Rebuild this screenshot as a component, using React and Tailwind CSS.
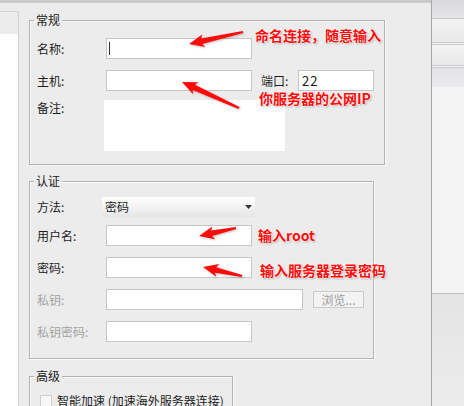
import React from 'react';

const font = "font-['Noto_Sans_CJK_SC','Noto_Sans',sans-serif]";

// red callout arrow, computed as a tapered polygon
const Arrow = ({ x1, y1, x2, y2 }) => {
  const dx = x2 - x1;
  const dy = y2 - y1;
  const len = Math.hypot(dx, dy);
  const ux = dx / len;
  const uy = dy / len;
  const nx = -uy;
  const ny = ux;
  const hl = 13;
  const hw = 6.5;
  const bx = x2 - ux * hl;
  const by = y2 - uy * hl;
  const p = (x, y, k) => `${(x + nx * k).toFixed(1)},${(y + ny * k).toFixed(1)}`;
  const pts = [
    p(x1, y1, 1.1),
    p(bx, by, 2.8),
    p(bx - ux * 2, by - uy * 2, hw),
    `${x2},${y2}`,
    p(bx - ux * 2, by - uy * 2, -hw),
    p(bx, by, -2.8),
    p(x1, y1, -1.1),
  ].join(' ');
  return <polygon points={pts} fill="#ff0a0a" />;
};

const Note = ({ left, top, children }) => (
  <div
    className="absolute text-[14px] leading-[16px] font-bold text-[#ff0a0a] whitespace-nowrap [text-shadow:0_0_2px_#fff,0_0_2px_#fff,0_0_2px_#fff,1px_1px_2px_rgba(0,0,0,0.4)]"
    style={{ left, top }}
  >
    {children}
  </div>
);

const Group = ({ title, className, children }) => (
  <div className={`relative border border-[#b3b3b3] shadow-[inset_1px_1px_0_#fafafa,1px_1px_0_#fafafa] ${className}`}>
    <span className="absolute -top-[9px] left-[4px] bg-[#ececec] px-[2px] text-[12px] leading-[16px] text-[#222]">
      {title}
    </span>
    {children}
  </div>
);

const Input = ({ w, children }) => (
  <div className={`h-[21px] ${w} border border-[#c6c6c6] bg-white flex items-center`}>{children}</div>
);

const Label = ({ w, gray, children }) => (
  <div className={`${w} text-[12px] leading-[16px] ${gray ? 'text-[#a3a3a3]' : 'text-[#1e1e1e]'}`}>{children}</div>
);

export default function App() {
  return (
    <div className={`relative w-[464px] h-[406px] overflow-hidden flex bg-[#ececec] ${font}`}>
      <div className="w-[432px] h-full flex flex-col border-r border-[#a8a8a8]">
        <div className="h-[3px] bg-[#cbcbcb]" />
        <div className="flex flex-1 min-h-0">
          {/* left list, mostly cut off */}
          <div className="w-[19px] mt-[8px] border-t border-r border-[#d2d2d2] flex flex-col">
            <div className="h-[22px] bg-[#ececec]" />
            <div className="flex-1 bg-white" />
          </div>

          <div className="flex-1 pl-[10px] pt-[17px]">
            <Group title="常规" className="w-[356px] pt-[17px] pl-[7px] pb-[13px]">
              <div className="flex items-center h-[21px]">
                <Label w="w-[69px]">名称:</Label>
                <Input w="w-[146px]">
                  <span className="ml-[2px] w-px h-[13px] bg-[#333]" />
                </Input>
              </div>
              <div className="flex items-center h-[21px] mt-[11px]">
                <Label w="w-[69px]">主机:</Label>
                <Input w="w-[146px]" />
                <div className="ml-[9px] w-[37px] text-[12px] leading-[16px] text-[#1e1e1e]">端口:</div>
                <Input w="w-[76px]">
                  <span className="ml-[3px] text-[13px] tracking-[1px] text-[#111]">22</span>
                </Input>
              </div>
              <div className="flex items-start mt-[9px]">
                <Label w="w-[67px]">备注:</Label>
                <div className="w-[181px] h-[51px] bg-white" />
              </div>
            </Group>

            <Group title="认证" className="w-[345px] mt-[16px] pt-[15px] pl-[7px] pb-[16px]">
              <div className="flex items-center h-[20px]">
                <Label w="w-[65px]">方法:</Label>
                <div className="w-[153px] h-[20px] bg-gradient-to-b from-white to-[#e6e6e6] flex items-center justify-between pl-[3px] pr-[3px]">
                  <span className="text-[12px] text-[#1e1e1e]">密码</span>
                  <svg width="7" height="4" viewBox="0 0 7 4">
                    <polygon points="0,0 7,0 3.5,4" fill="#333" />
                  </svg>
                </div>
              </div>
              <div className="flex items-center h-[21px] mt-[8px]">
                <Label w="w-[69px]">用户名:</Label>
                <Input w="w-[146px]" />
              </div>
              <div className="flex items-center h-[21px] mt-[11px]">
                <Label w="w-[69px]">密码:</Label>
                <Input w="w-[146px]" />
              </div>
              <div className="flex items-center h-[21px] mt-[11px]">
                <Label w="w-[69px]" gray>私钥:</Label>
                <Input w="w-[197px]" />
                <div className="ml-[10px] w-[51px] h-[17px] border border-[#cacaca] bg-[#f3f3f3] flex items-center justify-center text-[12px] text-[#9c9c9c]">
                  浏览...
                </div>
              </div>
              <div className="flex items-center h-[21px] mt-[11px]">
                <Label w="w-[69px]" gray>私钥密码:</Label>
                <Input w="w-[146px]" />
              </div>
            </Group>

            <Group title="高级" className="w-[204px] h-[60px] mt-[17px] pt-[16px] pl-[10px]">
              <div className="flex items-center">
                <div className="w-[12px] h-[12px] border border-[#cfcfcf] bg-[#f7f7f7]" />
                <span className="ml-[5px] text-[12px] leading-[16px] text-[#1e1e1e]">智能加速 (加速海外服务器连接)</span>
              </div>
            </Group>
          </div>
        </div>
      </div>

      {/* window behind the dialog */}
      <div className="flex-1 flex flex-col shadow-[inset_4px_0_4px_-2px_rgba(0,0,0,0.12)]">
        <div className="h-[18px] bg-gradient-to-b from-[#d9d9dd] to-[#e6e6e9]" />
        <div className="h-px bg-[#c6c6c8]" />
        <div className="h-[23px] bg-gradient-to-b from-[#f2f2f3] to-[#e9e9eb]" />
        <div className="h-px bg-[#c9c9cb]" />
        <div className="h-px bg-[#f3f3f3]" />
        <div className="h-px bg-[#c9c9cb]" />
        <div className="h-[20px] bg-gradient-to-b from-[#f2f2f3] to-[#e9e9eb]" />
        <div className="h-px bg-[#c9c9cb]" />
        <div className="h-px bg-[#f3f3f3]" />
        <div className="h-px bg-[#c9c9cb]" />
        <div className="h-[19px] bg-gradient-to-b from-[#e3e3e5] to-[#ebebed]" />
        <div className="h-[206px] bg-[#f4f4f4]" />
        <div className="h-px bg-[#c2c2c2]" />
        <div className="flex-1 bg-gradient-to-b from-[#e4e4e4] to-[#ececec]" />
      </div>

      {/* callouts */}
      <svg
        className="absolute inset-0 [filter:drop-shadow(1px_1px_1px_rgba(0,0,0,0.25))]"
        width="464"
        height="406"
        viewBox="0 0 464 406"
      >
        <Arrow x1={243} y1={32} x2={189} y2={44} />
        <Arrow x1={239} y1={108} x2={182} y2={82} />
        <Arrow x1={236} y1={228} x2={199} y2={236} />
        <Arrow x1={242} y1={276} x2={203} y2={267} />
      </svg>
      <Note left={255} top={27}>命名连接，随意输入</Note>
      <Note left={259} top={90}>你服务器的公网IP</Note>
      <Note left={258} top={227}>输入root</Note>
      <Note left={260} top={262}>输入服务器登录密码</Note>
    </div>
  );
}
